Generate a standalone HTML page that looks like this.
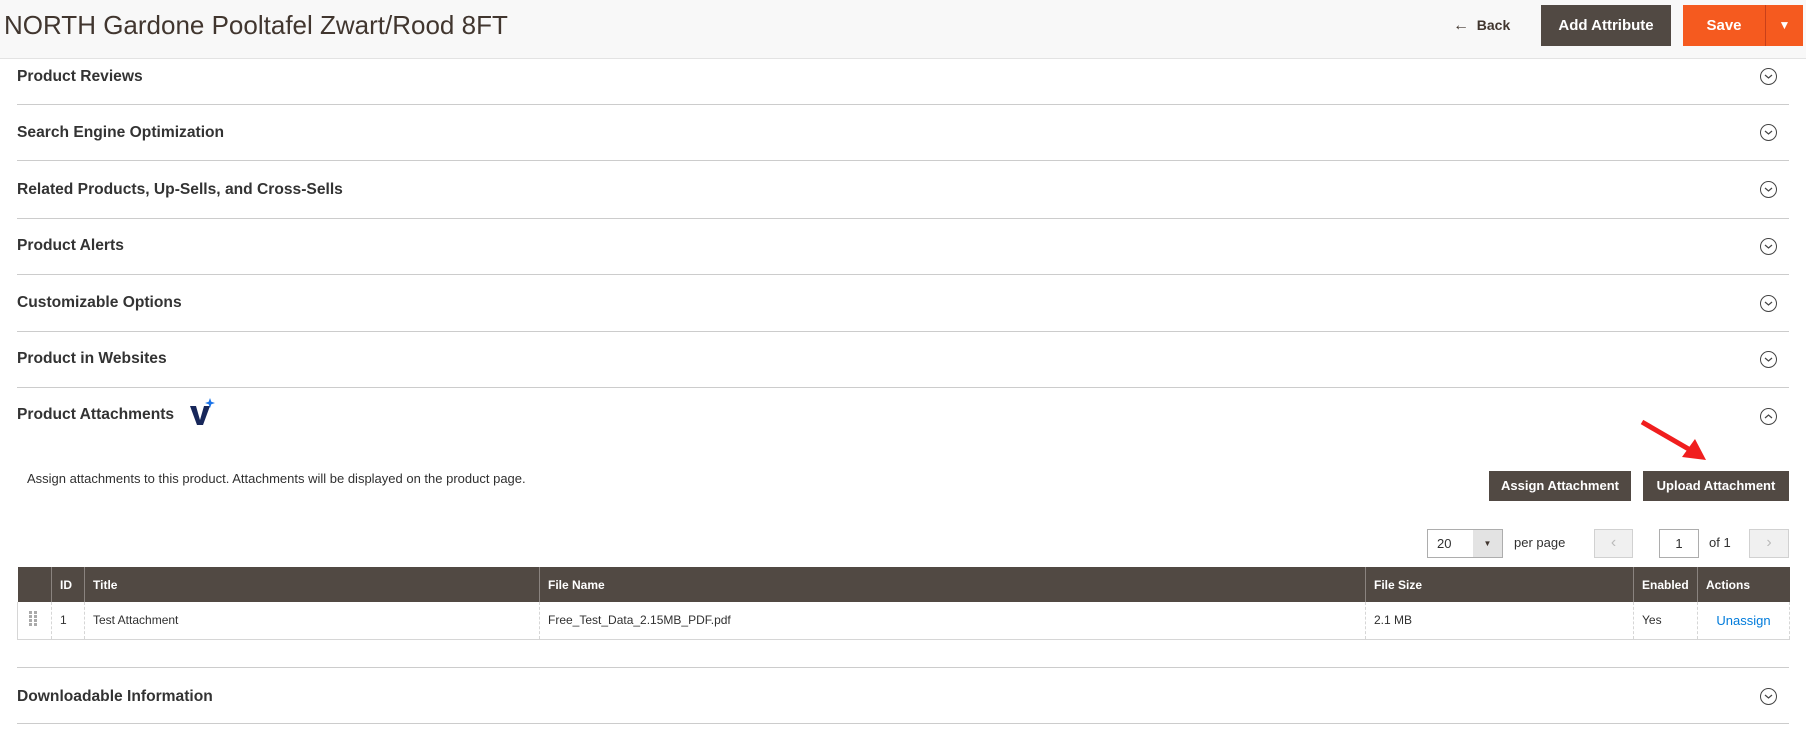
<!DOCTYPE html>
<html><head><meta charset="utf-8"><style>
*{margin:0;padding:0;box-sizing:border-box}
body{width:1806px;height:741px;background:#fff;font-family:"Liberation Sans",sans-serif;color:#303030;position:relative;overflow:hidden}
.a{position:absolute}
.hdr{left:0;top:0;width:1806px;height:59px;background:#f8f8f8;border-bottom:1px solid #e3e3e3}
.sec{position:absolute;left:17px;font-size:15.6px;font-weight:bold;color:#333;line-height:20px}
.ln{position:absolute;left:17px;width:1772px;height:1px;background:#cccccc}
.chev{position:absolute;left:1760px;width:17px;height:17px;border:1px solid #444;border-radius:50%}
.chev svg{position:absolute;left:3px;top:4px}
.btn{position:absolute;background:#514943;color:#fff;font-weight:bold;font-size:13px;text-align:center}
th,td{font-size:12px;text-align:left;padding:0 8px}
th{background:#514943;color:#fff;font-weight:bold;height:35px;border-left:1px solid #8a837f}
td{height:37px;border-left:1px dashed #d6d6d6;border-bottom:1px solid #d6d6d6;color:#303030}
table{border-collapse:collapse;position:absolute;left:17px;top:567px;width:1772px;table-layout:fixed}
</style></head><body>
<div class="a hdr"></div>
<div class="a" style="left:4px;top:9px;font-size:26px;color:#41362f;line-height:32px">NORTH Gardone Pooltafel Zwart/Rood 8FT</div>
<div class="a" style="left:1453px;top:15px;font-size:14px;font-weight:bold;color:#41362f;line-height:20px"><span style="font-size:16px">&#8592;</span>&nbsp; Back</div>
<div class="btn" style="left:1541px;top:5px;width:130px;height:41px;line-height:41px;font-size:15px">Add Attribute</div>
<div class="btn" style="left:1683px;top:5px;width:120px;height:41px;line-height:41px;background:#f55a1f;font-size:15px"><span style="position:absolute;left:0;width:82px;text-align:center">Save</span><span style="position:absolute;left:82px;top:0;width:1px;height:41px;background:#c8401a"></span><span style="position:absolute;left:83px;width:37px;text-align:center;font-size:12px">&#9660;</span></div>

<div class="sec" style="top:67px">Product Reviews</div>
<div class="ln" style="top:104px"></div>
<div class="sec" style="top:123px">Search Engine Optimization</div>
<div class="ln" style="top:160px"></div>
<div class="sec" style="top:180px">Related Products, Up-Sells, and Cross-Sells</div>
<div class="ln" style="top:218px"></div>
<div class="sec" style="top:236px">Product Alerts</div>
<div class="ln" style="top:274px"></div>
<div class="sec" style="top:293px">Customizable Options</div>
<div class="ln" style="top:331px"></div>
<div class="sec" style="top:349px">Product in Websites</div>
<div class="ln" style="top:387px"></div>
<div class="sec" style="top:405px">Product Attachments</div>
<svg class="a" style="left:188px;top:398px" width="30" height="30" viewBox="0 0 30 30"><path d="M2 8 L8 8 L12 22 L16 8 L22 8 L15 27 L9 27 Z" fill="#17275a"/><path d="M22 0 L23.3 3.7 L27 5 L23.3 6.3 L22 10 L20.7 6.3 L17 5 L20.7 3.7 Z" fill="#1a73e8"/></svg>
<div class="ln" style="top:667px"></div>
<div class="sec" style="top:687px">Downloadable Information</div>
<div class="ln" style="top:723px"></div>

<div class="chev" style="top:68px"><svg width="9" height="7"><path d="M1 2 L4.5 5 L8 2" stroke="#444" fill="none" stroke-width="1.2"/></svg></div>
<div class="chev" style="top:124px"><svg width="9" height="7"><path d="M1 2 L4.5 5 L8 2" stroke="#444" fill="none" stroke-width="1.2"/></svg></div>
<div class="chev" style="top:181px"><svg width="9" height="7"><path d="M1 2 L4.5 5 L8 2" stroke="#444" fill="none" stroke-width="1.2"/></svg></div>
<div class="chev" style="top:238px"><svg width="9" height="7"><path d="M1 2 L4.5 5 L8 2" stroke="#444" fill="none" stroke-width="1.2"/></svg></div>
<div class="chev" style="top:295px"><svg width="9" height="7"><path d="M1 2 L4.5 5 L8 2" stroke="#444" fill="none" stroke-width="1.2"/></svg></div>
<div class="chev" style="top:351px"><svg width="9" height="7"><path d="M1 2 L4.5 5 L8 2" stroke="#444" fill="none" stroke-width="1.2"/></svg></div>
<div class="chev" style="top:408px"><svg width="9" height="7"><path d="M1 5 L4.5 2 L8 5" stroke="#444" fill="none" stroke-width="1.2"/></svg></div>
<div class="chev" style="top:688px"><svg width="9" height="7"><path d="M1 2 L4.5 5 L8 2" stroke="#444" fill="none" stroke-width="1.2"/></svg></div>

<svg class="a" style="left:1638px;top:416px" width="75" height="50"><line x1="4" y1="6" x2="54" y2="35" stroke="#f01e1e" stroke-width="5"/><path d="M68 44 L44 41 L57 23 Z" fill="#f01e1e"/></svg>

<div class="a" style="left:27px;top:471px;font-size:13px;color:#303030">Assign attachments to this product. Attachments will be displayed on the product page.</div>
<div class="btn" style="left:1489px;top:471px;width:142px;height:30px;line-height:30px">Assign Attachment</div>
<div class="btn" style="left:1643px;top:471px;width:146px;height:30px;line-height:30px">Upload Attachment</div>

<div class="a" style="left:1427px;top:529px;width:76px;height:29px;border:1px solid #adadad;background:#fff"><span style="position:absolute;left:9px;top:6px;font-size:13px">20</span><span style="position:absolute;left:45px;top:0;width:29px;height:27px;background:#e3e3e3;font-size:8px;text-align:center;line-height:27px;color:#41362f">&#9660;</span></div>
<div class="a" style="left:1514px;top:535px;font-size:13px">per page</div>
<div class="a" style="left:1594px;top:529px;width:39px;height:29px;border:1px solid #d1d1d1;background:#f0f0f0;color:#bbb;text-align:center;line-height:26px;font-size:16px">&#8249;</div>
<div class="a" style="left:1659px;top:529px;width:40px;height:29px;border:1px solid #adadad;text-align:center;line-height:27px;font-size:13px">1</div>
<div class="a" style="left:1709px;top:535px;font-size:13px">of 1</div>
<div class="a" style="left:1749px;top:529px;width:40px;height:29px;border:1px solid #d1d1d1;background:#f0f0f0;color:#bbb;text-align:center;line-height:26px;font-size:16px">&#8250;</div>

<table>
<colgroup><col style="width:34px"><col style="width:33px"><col style="width:455px"><col style="width:826px"><col style="width:268px"><col style="width:64px"><col style="width:92px"></colgroup>
<tr><th style="border-left:none"></th><th>ID</th><th>Title</th><th>File Name</th><th>File Size</th><th>Enabled</th><th>Actions</th></tr>
<tr><td style="border-left:1px solid #d6d6d6;padding-left:11px"><svg width="10" height="16"><g fill="#aaa"><rect x="0" y="0" width="3" height="3"/><rect x="5" y="0" width="3" height="3"/><rect x="0" y="4" width="3" height="3"/><rect x="5" y="4" width="3" height="3"/><rect x="0" y="8" width="3" height="3"/><rect x="5" y="8" width="3" height="3"/><rect x="0" y="12" width="3" height="3"/><rect x="5" y="12" width="3" height="3"/></g></svg></td><td>1</td><td>Test Attachment</td><td>Free_Test_Data_2.15MB_PDF.pdf</td><td>2.1 MB</td><td>Yes</td><td style="color:#007bdb;text-align:center;font-size:13px;border-right:1px dashed #d6d6d6">Unassign</td></tr>
</table>
</body></html>
